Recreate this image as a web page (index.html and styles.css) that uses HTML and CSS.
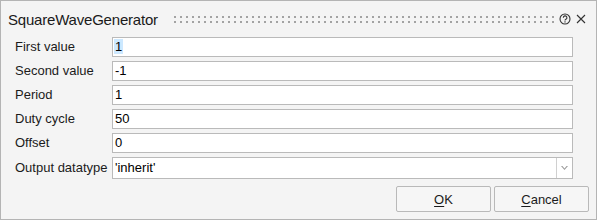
FILE: index.html
```html
<!DOCTYPE html>
<html>
<head>
<meta charset="utf-8">
<link rel="stylesheet" href="styles.css">
</head>
<body>
<div class="dialog">
  <div class="titlebar">
    <div class="title">SquareWaveGenerator</div>
    <svg class="grip" height="7"><defs><pattern id="dots" width="6" height="5" patternUnits="userSpaceOnUse"><rect x="0" y="0" width="2" height="2" fill="#a3a3a3"/></pattern></defs><rect width="100%" height="7" fill="url(#dots)"/></svg>
    <svg class="help" width="12" height="12" viewBox="0 0 12 12"><circle cx="6" cy="6" r="5" fill="none" stroke="#333" stroke-width="1.1"/><path d="M4.3 4.7 A1.8 1.8 0 1 1 6.9 6.3 C6.3 6.6 6 6.9 6 7.5" fill="none" stroke="#333" stroke-width="1.1"/><rect x="5.4" y="8.3" width="1.2" height="1.2" fill="#333"/></svg>
    <svg class="close" width="10" height="10" viewBox="0 0 10 10"><path d="M1 1 L9 9 M9 1 L1 9" stroke="#333" stroke-width="1.1"/></svg>
  </div>
  <div class="form">
    <div class="label">First value</div><div class="field"><span class="sel">1</span></div>
    <div class="label">Second value</div><div class="field">-1</div>
    <div class="label">Period</div><div class="field">1</div>
    <div class="label">Duty cycle</div><div class="field">50</div>
    <div class="label">Offset</div><div class="field">0</div>
    <div class="label">Output datatype</div><div class="field select"><span class="val">'inherit'</span><span class="drop"><svg width="7" height="5" viewBox="0 0 7 5"><path d="M0 0 L3.5 4 L7 0 L5.6 0 L3.5 2.4 L1.4 0 Z" fill="#9a9a9a"/></svg></span></div>
  </div>
  <div class="buttons">
    <div class="btn"><u>O</u>K</div>
    <div class="btn"><u>C</u>ancel</div>
  </div>
</div>
</body>
</html>
```
FILE: styles.css
```css
html, body { margin: 0; padding: 0; }
body { font-family: "Liberation Sans", Arial, sans-serif; font-size: 13px; color: #1b1b1b; }
.dialog {
  width: 597px; height: 220px; box-sizing: border-box;
  border: 1px solid #b4b4b4; background: #f4f4f4;
  display: flex; flex-direction: column;
}
.titlebar {
  height: 36px; display: flex; align-items: center;
  padding: 0 10px 0 7px;
}
.title { font-size: 15px; color: #1a1a1a; letter-spacing: -0.2px; }
.grip { flex: 1; margin: 0 5px 0 16px; }
.help { margin-right: 5px; }
.form {
  display: grid; grid-template-columns: 97px 1fr;
  row-gap: 4px; padding: 0 23px 0 14px;
  grid-auto-rows: 20px;
}
.form .label { line-height: 20px; white-space: nowrap; }
.field {
  box-sizing: border-box; border: 1px solid #bababa; background: #fff;
  padding: 0 2px; line-height: 18px; color: #000;
}
.sel { background: #cce8ff; padding: 0 1px; margin-left: -1px; }
.form .select { display: flex; padding-right: 0; height: 22px; line-height: 20px; }
.form .label:nth-last-child(2) { line-height: 22px; }
.select .val { flex: 1; }
.drop {
  width: 15px; border-left: 1px solid #d0d0d0;
  display: flex; align-items: center; justify-content: center;
}
.buttons {
  display: flex; justify-content: flex-end; gap: 3px;
  padding: 9px 7px 0 0;
}
.btn {
  box-sizing: border-box; width: 95px; height: 26px;
  border: 1px solid #b9b9b9; border-radius: 2px; background: #f6f6f6;
  display: flex; align-items: center; justify-content: center;
  color: #1b1b1b;
}
.btn u { text-decoration-thickness: 1px; text-underline-offset: 2px; }
```
